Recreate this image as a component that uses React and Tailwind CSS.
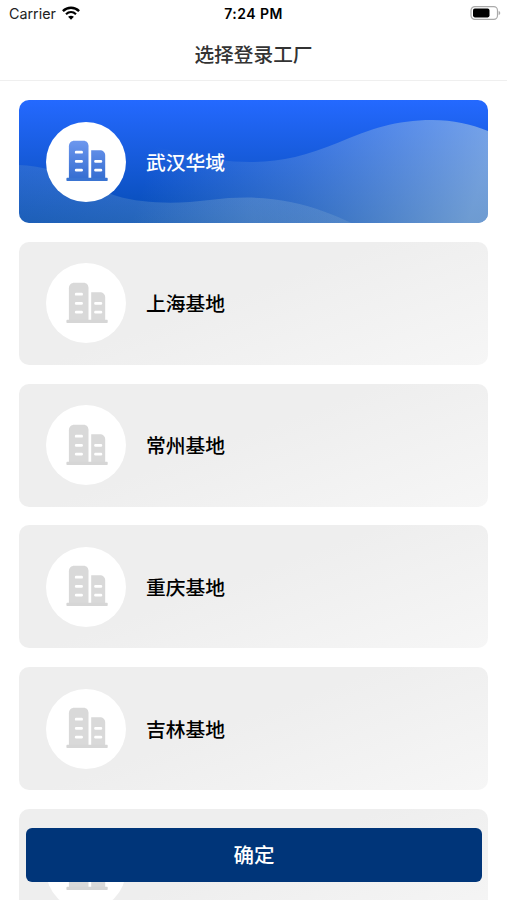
import { useState } from 'react';

// last entry only peeks out from behind the confirm bar
const FACTORIES = ['武汉华域', '上海基地', '常州基地', '重庆基地', '吉林基地', ''];

function BuildingIcon({ active }) {
  const fill = active ? 'url(#building)' : '#d9d9d9';
  const base = active ? '#3a74d2' : '#d6d6d6';
  return (
    <svg className="mb-px ml-px h-[42px] w-[42px]" viewBox="0 0 42 42">
      <defs>
        <linearGradient id="building" gradientUnits="userSpaceOnUse" x1="0" y1="1" x2="0" y2="41">
          <stop offset="0" stopColor="#6d97ee" />
          <stop offset="1" stopColor="#326bcf" />
        </linearGradient>
      </defs>
      <path fill={fill} d="M2.900 39V6.200C2.900 2.900 5.200.8 8.400.8h9c3.200 0 5.100 2.100 5.100 5.400V39z" />
      <path fill={fill} d="M25.200 39V10.300h8.600c3.200 0 5.400 2 5.400 5.200V39z" />
      <path fill={base} d="M1.400 37.700h39.300c.6 0 1 .4 1 1v1.300c0 .6-.4 1-1 1H1.400c-.6 0-1-.4-1-1v-1.300c0-.6.4-1 1-1z" />
      <g fill="#fff">
        <rect x="8.900" y="10.800" width="8" height="2.800" rx="1.200" />
        <rect x="8.900" y="19.900" width="8" height="2.800" rx="1.200" />
        <rect x="8.900" y="28.700" width="8" height="2.800" rx="1.200" />
        <rect x="28.200" y="19.900" width="8" height="2.800" rx="1.200" />
        <rect x="28.200" y="28.700" width="8" height="2.800" rx="1.200" />
      </g>
    </svg>
  );
}

function Waves() {
  return (
    <svg className="absolute inset-0 h-full w-full" viewBox="0 0 470 123" preserveAspectRatio="none">
      <defs>
        <linearGradient id="waveRight" gradientUnits="userSpaceOnUse" x1="140" y1="30" x2="450" y2="123">
          <stop offset="0" stopColor="#9cc0d8" stopOpacity="0" />
          <stop offset="0.45" stopColor="#9cbce0" stopOpacity="0.26" />
          <stop offset="1" stopColor="#b4d0e4" stopOpacity="0.6" />
        </linearGradient>
        <linearGradient id="waveLeft" gradientUnits="userSpaceOnUse" x1="0" y1="0" x2="335" y2="0">
          <stop offset="0" stopColor="#9cc0c8" stopOpacity="0.16" />
          <stop offset="0.7" stopColor="#a4c4d4" stopOpacity="0.26" />
          <stop offset="1" stopColor="#b4d0dc" stopOpacity="0.14" />
        </linearGradient>
      </defs>
      <path
        fill="url(#waveRight)"
        d="M100 123V40C150 48 190 62 231 62C262 62 287 56 319 43C352 29 378 20 414 20C436 20 452 24 470 31V123z"
      />
      <path
        fill="url(#waveLeft)"
        d="M0 65C45 67 62 85 98 96C125 104 160 104 191 100C222 96 250 97 272 102C297 107 316 115 333 123H0z"
      />
    </svg>
  );
}

function FactoryCard({ name, active, onClick }) {
  return (
    <button
      onClick={onClick}
      className={`relative flex h-[123px] w-full shrink-0 items-center overflow-hidden rounded-[10px] pl-[27px] text-left ${
        active
          ? 'bg-linear-to-b from-[#2469ff] to-[#044cb4] text-white'
          : 'bg-linear-[160deg] from-[#eeeeee] from-45% to-[#f6f6f6] text-black'
      }`}
    >
      {active && <Waves />}
      <span className="relative flex h-20 w-20 items-center justify-center rounded-full bg-white">
        <BuildingIcon active={active} />
      </span>
      <span className="relative ml-5 text-[19.8px] leading-7 font-medium">{name}</span>
    </button>
  );
}

function StatusBar() {
  return (
    <div className="grid h-7 shrink-0 grid-cols-3 items-center pr-[6px] pl-[9px] font-['Inter','Liberation_Sans',sans-serif] text-black">
      <div className="flex items-center gap-[6px]">
        <span className="text-[14.3px] leading-5 text-[#222]">Carrier</span>
        <svg className="-mt-[2px] h-[14px] w-[18px]" viewBox="0 0 18 14" fill="none" stroke="#000">
          <path strokeWidth="2.400" d="M.9 5.100C5.500.600 12.500.600 17.100 5.100" />
          <path strokeWidth="2.200" d="M4 8.200c2.900-2.700 7.100-2.700 10 0" />
          <path fill="#000" stroke="none" d="M9 13.700 6.100 10.800c1.700-1.500 4.100-1.500 5.800 0z" />
        </svg>
      </div>
      <span className="-ml-[3px] text-center text-[14px] leading-5 font-semibold tracking-[0.45px]">7:24 PM</span>
      <svg className="-mt-[2px] h-[14px] w-[31px] justify-self-end" viewBox="0 0 31 14">
        <rect x="1" y=".6" width="26.500" height="12.800" rx="3.800" fill="#fff" stroke="#aaa" strokeWidth="1.200" />
        <rect x="3" y="2.600" width="16.500" height="8.800" rx="1.800" fill="#000" />
        <path fill="#aaa" d="M28.600 4.900c2.200.7 2.200 3.500 0 4.200z" />
      </svg>
    </div>
  );
}

export default function App() {
  const [selected, setSelected] = useState(0);

  return (
    <div className="relative flex h-[900px] w-full flex-col overflow-hidden bg-white font-['Noto_Sans_CJK_SC',sans-serif]">
      <StatusBar />
      <header className="flex h-[53px] shrink-0 items-center justify-center border-b border-[#efefef]">
        <h1 className="text-[19.700px] leading-7 font-medium text-[#333]">选择登录工厂</h1>
      </header>

      <main className="flex flex-col gap-[18.750px] px-[19px] pt-[19px]">
        {FACTORIES.map((name, i) => (
          <FactoryCard key={i} name={name} active={i === selected} onClick={() => setSelected(i)} />
        ))}
      </main>

      {/* Confirm bar floats above the list */}
      <button className="absolute right-[25px] bottom-[18px] left-[26px] h-[54px] rounded-[6px] bg-[#003579] pb-[2px] text-[20.500px] font-medium text-white">
        确定
      </button>
    </div>
  );
}
